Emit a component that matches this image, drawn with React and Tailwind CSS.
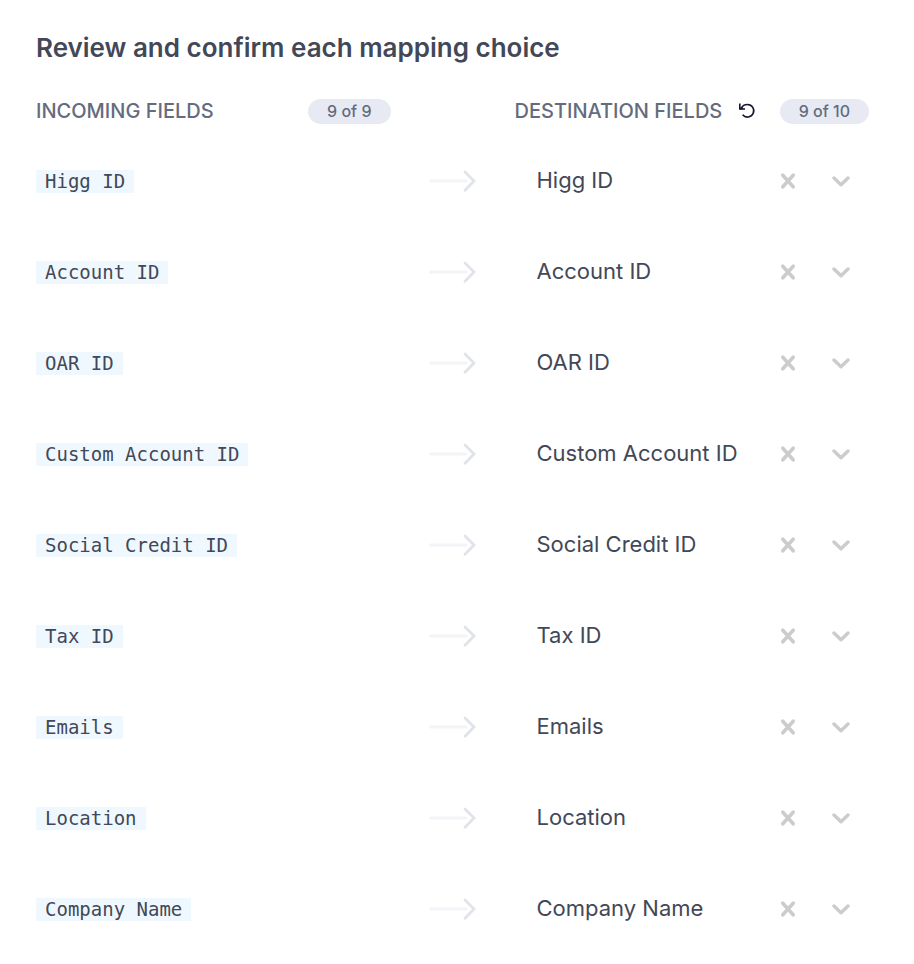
import { useState } from "react";

const FIELDS = [
  "Higg ID",
  "Account ID",
  "OAR ID",
  "Custom Account ID",
  "Social Credit ID",
  "Tax ID",
  "Emails",
  "Location",
  "Company Name",
];

function ArrowIcon() {
  return (
    <svg width="48" height="24" viewBox="0 0 48 24" fill="none" strokeLinecap="round" aria-hidden="true">
      <path d="M1.5 12H37" stroke="#f3f4f7" strokeWidth="3" />
      <path d="M36 3L45 12L36 21.2" stroke="#e1e3ea" strokeWidth="2.8" strokeLinejoin="miter" />
    </svg>
  );
}

function CrossIcon() {
  return (
    <svg width="16" height="18" viewBox="0 0 16 18" fill="none" stroke="#cccccc" strokeWidth="3.6" strokeLinecap="round" aria-hidden="true">
      <path d="M2.8 3.2L13.2 14.8M13.2 3.2L2.8 14.8" />
    </svg>
  );
}

function ChevronIcon() {
  return (
    <svg width="18" height="12" viewBox="0 0 18 12" fill="none" stroke="#cccccc" strokeWidth="3.4" strokeLinecap="round" strokeLinejoin="round" aria-hidden="true">
      <path d="M2 3L9 9.8L16 3" />
    </svg>
  );
}

function ResetIcon() {
  return (
    <svg width="18" height="16" viewBox="0 0 18 16" fill="none" stroke="#14142f" strokeWidth="1.6" aria-hidden="true">
      <path d="M1.8 0.6V6H7" />
      <path d="M2.2 5.8L3.8 4L5 5.8Z" fill="#14142f" strokeWidth="0.8" />
      <path d="M3 5.4C4.4 2.9 6.6 1.5 9.4 1.5A6.3 6.3 0 1 1 4.6 11.8" />
    </svg>
  );
}

function CountPill({ children }) {
  return (
    <span className="flex h-[25px] items-center rounded-full bg-[#e7eaf3] px-[19px] text-[16px] font-medium text-[#646b7e]">
      {children}
    </span>
  );
}

function MappingRow({ field }) {
  const [value, setValue] = useState(field);
  return (
    <li className="grid h-[91px] grid-cols-[1fr_124px_1fr] items-center">
      <code className="mt-0.5 justify-self-start bg-[#f0f8ff] px-[9px] font-['DejaVu_Sans_Mono',monospace] text-[19px] leading-[23px] text-[#424857]">
        {field}
      </code>
      <span className="flex justify-center">
        <ArrowIcon />
      </span>
      <div className="grid grid-cols-[1fr_16px_18px] items-center gap-x-9 pr-[19px]">
        <select
          aria-label={`Destination for ${field}`}
          value={value}
          onChange={(event) => setValue(event.target.value)}
          className="col-span-3 col-start-1 row-start-1 h-11 w-full appearance-none bg-transparent pl-[22px] text-[22px] text-[#424857]"
        >
          <option value=""></option>
          {FIELDS.map((name) => (
            <option key={name}>{name}</option>
          ))}
        </select>
        <button
          type="button"
          aria-label={`Clear ${field}`}
          onClick={() => setValue("")}
          className="z-10 col-start-2 row-start-1"
        >
          <CrossIcon />
        </button>
        <span className="pointer-events-none col-start-3 row-start-1">
          <ChevronIcon />
        </span>
      </div>
    </li>
  );
}

export default function App() {
  return (
    <main className="bg-white pt-7 pr-[45px] pl-9 font-['Inter',sans-serif]">
      <h1 className="text-[26px] leading-10 font-semibold text-[#424857]">
        Review and confirm each mapping choice
      </h1>
      <div className="mt-7 grid h-[30px] grid-cols-[1fr_124px_1fr] items-center text-[#646b7e]">
        <div className="flex items-center justify-between">
          <h2 className="text-[20px] font-medium">INCOMING FIELDS</h2>
          <CountPill>9 of 9</CountPill>
        </div>
        <div className="col-start-3 flex items-center whitespace-nowrap">
          <h2 className="text-[20px] font-medium">DESTINATION FIELDS</h2>
          <button type="button" aria-label="Reset mappings" className="mr-6 ml-auto">
            <ResetIcon />
          </button>
          <CountPill>9 of 10</CountPill>
        </div>
      </div>
      <ul className="mt-[9px]">
        {FIELDS.map((field) => (
          <MappingRow key={field} field={field} />
        ))}
      </ul>
    </main>
  );
}
